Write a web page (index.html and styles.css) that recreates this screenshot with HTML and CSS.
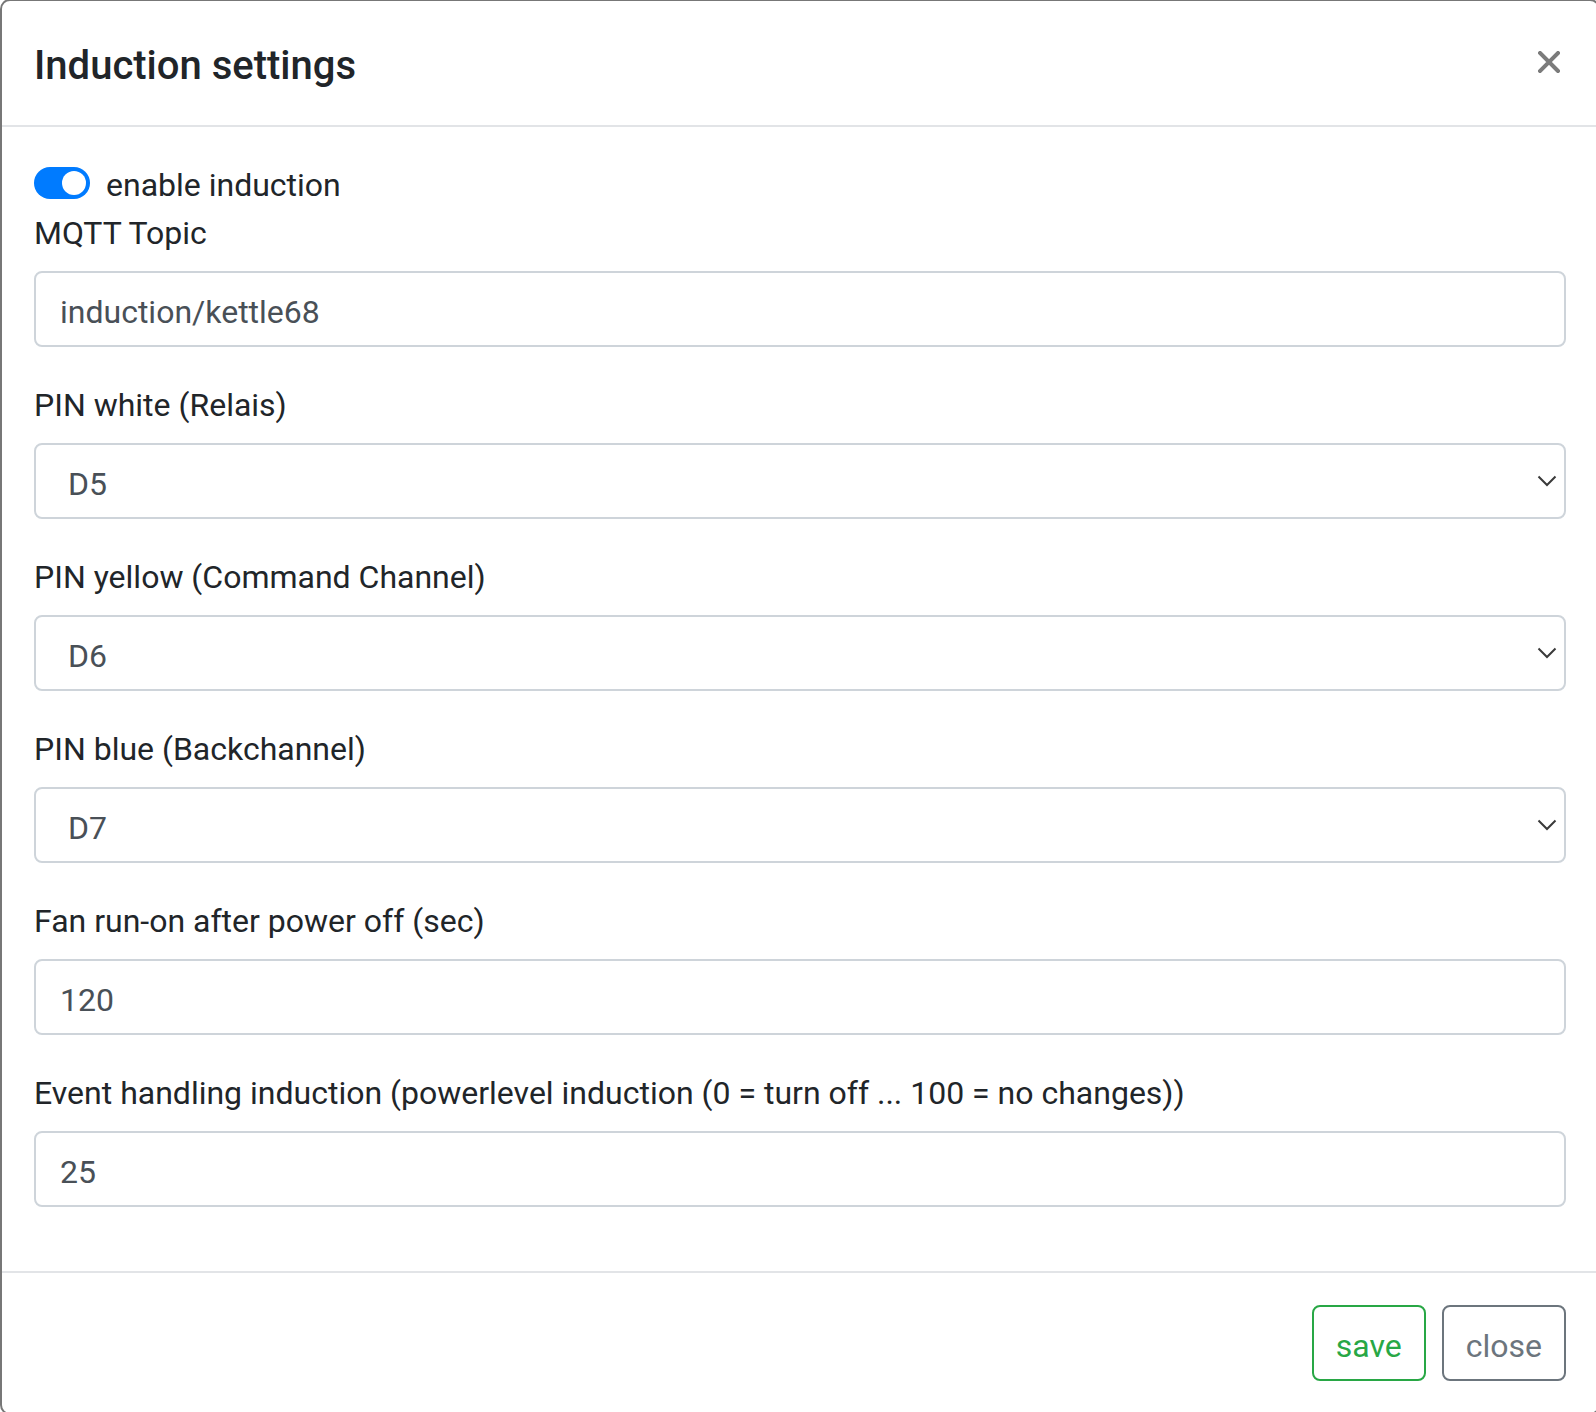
FILE: index.html
```html
<!DOCTYPE html>
<html lang="en">
<head>
<meta charset="utf-8">
<title>Induction settings</title>
<link rel="stylesheet" href="styles.css">
</head>
<body>
<div class="modal">
  <div class="modal-header">
    <h5 class="modal-title">Induction settings</h5>
    <button class="close" type="button" aria-label="Close">
      <svg width="22" height="22" viewBox="0 0 22 22"><path d="M2 2L20 20M20 2L2 20" stroke="currentColor" stroke-width="4" stroke-linecap="square"/></svg>
    </button>
  </div>
  <div class="modal-body">
    <div class="switch-row">
      <span class="switch"><span class="knob"></span></span>
      <span class="switch-label">enable induction</span>
    </div>
    <div class="form-group">
      <label class="label">MQTT Topic</label>
      <input class="form-control" type="text" value="induction/kettle68">
    </div>
    <div class="form-group">
      <label class="label">PIN white (Relais)</label>
      <div class="select-wrap">
        <select class="form-select"><option>D5</option></select>
        <svg class="chevron" width="20" height="12" viewBox="0 0 20 12"><path d="M1.5 1.5L10 10L18.5 1.5" fill="none" stroke="#3a3a3a" stroke-width="2"/></svg>
      </div>
    </div>
    <div class="form-group">
      <label class="label">PIN yellow (Command Channel)</label>
      <div class="select-wrap">
        <select class="form-select"><option>D6</option></select>
        <svg class="chevron" width="20" height="12" viewBox="0 0 20 12"><path d="M1.5 1.5L10 10L18.5 1.5" fill="none" stroke="#3a3a3a" stroke-width="2"/></svg>
      </div>
    </div>
    <div class="form-group">
      <label class="label">PIN blue (Backchannel)</label>
      <div class="select-wrap">
        <select class="form-select"><option>D7</option></select>
        <svg class="chevron" width="20" height="12" viewBox="0 0 20 12"><path d="M1.5 1.5L10 10L18.5 1.5" fill="none" stroke="#3a3a3a" stroke-width="2"/></svg>
      </div>
    </div>
    <div class="form-group">
      <label class="label">Fan run-on after power off (sec)</label>
      <input class="form-control" type="text" value="120">
    </div>
    <div class="form-group">
      <label class="label">Event handling induction (powerlevel induction (0 = turn off ... 100 = no changes))</label>
      <input class="form-control" type="text" value="25">
    </div>
  </div>
  <div class="modal-footer">
    <button class="btn btn-save" type="button">save</button>
    <button class="btn btn-close" type="button">close</button>
  </div>
</div>
</body>
</html>
```

FILE: styles.css
```css
html, body {
  margin: 0;
  padding: 0;
  background: #ffffff;
  overflow: hidden;
}

body {
  font-family: Roboto, "Liberation Sans", sans-serif;
  color: #212529;
  font-size: 32px;
}

.modal {
  box-sizing: border-box;
  width: 1600px;
  margin-top: -1px;
  border: 2px solid #777777;
  border-radius: 10px;
  background: #ffffff;
}

.modal-header {
  display: flex;
  align-items: flex-start;
  padding: 32px;
  border-bottom: 2px solid #e2e4e7;
}

.modal-title {
  margin: 0;
  padding-top: 6px;
  font-size: 40px;
  line-height: 54px;
  font-weight: 500;
  color: #212529;
}

.close {
  margin: 18px 6px 0 auto;
  padding: 0;
  border: 0;
  background: transparent;
  color: #7b7b7b;
  width: 22px;
  height: 22px;
  display: block;
}

.close svg {
  display: block;
}

.modal-body {
  padding: 32px;
}

.switch-row {
  display: flex;
  align-items: center;
  gap: 16px;
  height: 48px;
}

.switch {
  box-sizing: border-box;
  width: 56px;
  height: 32px;
  border-radius: 16px;
  background: #007bff;
  display: flex;
  align-items: center;
  justify-content: flex-end;
  padding-right: 4px;
}

.knob {
  width: 24px;
  height: 24px;
  border-radius: 50%;
  background: #ffffff;
}

.switch-label {
  color: #212529;
  padding-top: 4px;
  line-height: 44px;
}

.form-group {
  margin-bottom: 32px;
}

.label {
  display: block;
  padding-top: 5px;
  line-height: 43px;
  margin-bottom: 16px;
  color: #212529;
}

.form-control,
.form-select {
  box-sizing: border-box;
  display: block;
  width: 100%;
  height: 76px;
  border: 2px solid #ced4da;
  border-radius: 8px;
  padding: 6px 24px 0;
  font-family: Roboto, "Liberation Sans", sans-serif;
  font-size: 32px;
  color: #495057;
  background: #ffffff;
  outline: none;
}

.select-wrap {
  position: relative;
}

.form-select {
  -webkit-appearance: none;
  appearance: none;
  padding-left: 32px;
}

.chevron {
  position: absolute;
  right: 9px;
  top: 32px;
  pointer-events: none;
}

.modal-footer {
  display: flex;
  justify-content: flex-end;
  gap: 16px;
  padding: 32px;
  border-top: 2px solid #e2e4e7;
}

.btn {
  box-sizing: border-box;
  height: 76px;
  padding: 6px 22px 0;
  border: 2px solid;
  border-radius: 8px;
  background: #ffffff;
  font-family: Roboto, "Liberation Sans", sans-serif;
  font-size: 32px;
  line-height: 48px;
}

.btn-save {
  color: #28a745;
  border-color: #28a745;
}

.btn-close {
  color: #6c757d;
  border-color: #6c757d;
}
```
